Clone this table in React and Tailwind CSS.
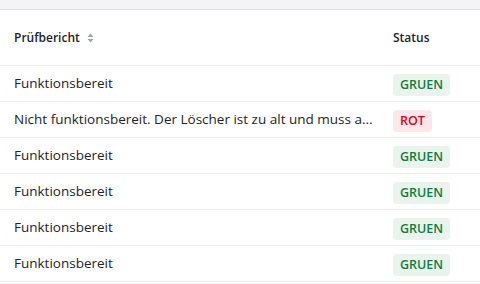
import React from "react";

const rows = [
  { text: "Funktionsbereit", status: "GRUEN" },
  { text: "Nicht funktionsbereit. Der Löscher ist zu alt und muss a...", status: "ROT" },
  { text: "Funktionsbereit", status: "GRUEN" },
  { text: "Funktionsbereit", status: "GRUEN" },
  { text: "Funktionsbereit", status: "GRUEN" },
  { text: "Funktionsbereit", status: "GRUEN" },
];

function StatusBadge({ status }) {
  if (status === "ROT") {
    return (
      <span className="inline-flex h-[22px] items-center rounded px-[7px] text-[12.5px] font-semibold text-[#d6001c] bg-[#fde7e9]">
        ROT
      </span>
    );
  }
  return (
    <span className="inline-flex h-[22px] items-center rounded px-[7px] text-[12.5px] font-semibold text-[#107c41] bg-[#e9f4ec]">
      GRUEN
    </span>
  );
}

function SortIcon() {
  return (
    <svg width="7" height="10" viewBox="0 0 7 10" className="ml-[7px]">
      <path d="M3.5 0.5 L6.5 4 H0.5 Z" fill="#9ea3ac" />
      <path d="M3.5 9.5 L6.5 6 H0.5 Z" fill="#9ea3ac" />
    </svg>
  );
}

export default function App() {
  return (
    <div
      className="w-[480px] h-[284px] overflow-hidden bg-white text-[#242424]"
      style={{ fontFamily: '"Open Sans", "Noto Sans", sans-serif' }}
    >
      <div className="h-[10px] bg-[#f4f4f6] border-b border-[#e1e1e5]" />
      <div className="flex h-[56px] items-center border-b border-[#ececf0]">
        <div className="flex w-[379px] shrink-0 items-center pl-[14px] text-[12px] font-semibold">
          Prüfbericht
          <SortIcon />
        </div>
        <div className="pl-[14px] text-[12px] font-semibold">Status</div>
      </div>
      {rows.map((r, i) => (
        <div key={i} className="flex h-[36px] items-center border-b border-[#ececf0]">
          <div className="w-[379px] shrink-0 whitespace-nowrap pl-[14px] text-[13.5px]">{r.text}</div>
          <div className="pl-[14px]">
            <StatusBadge status={r.status} />
          </div>
        </div>
      ))}
    </div>
  );
}
